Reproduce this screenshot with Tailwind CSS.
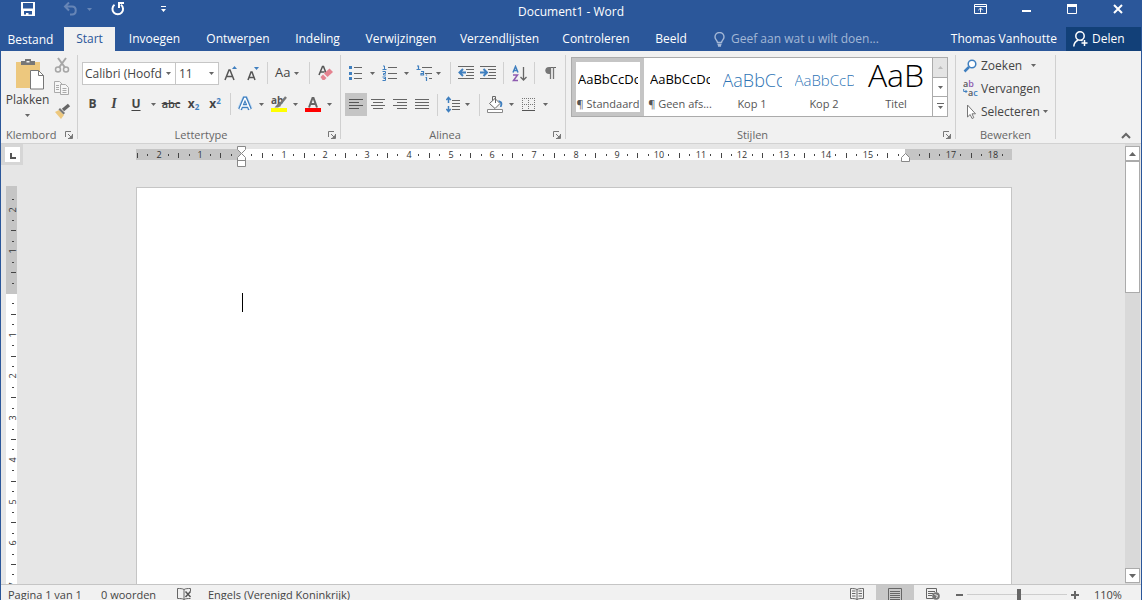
<!DOCTYPE html>
<html lang="nl">
<head>
<meta charset="utf-8">
<title>Document1 - Word</title>
<script src="https://cdn.jsdelivr.net/npm/@tailwindcss/browser@4"></script>
</head>
<body class="flex h-screen flex-col overflow-hidden border-x border-[#2b579a] bg-[#e6e6e6] font-['Open_Sans','Noto_Sans',sans-serif] text-xs text-[#444]">
<svg class="hidden">
  <symbol id="dn" viewBox="0 0 5 3"><path d="M0 0h5L2.500 3z" fill="currentColor"/></symbol>
  <symbol id="launch" viewBox="0 0 8 8"><path d="M.5 6V.5H6M3 3l3 3M7.500 3v4.500H3" fill="none" stroke="#777"/><path d="M7 4v3H4z" fill="#777"/></symbol>
</svg>

<header class="bg-[#2b579a] text-white">
  <div class="grid h-[27px] grid-cols-[1fr_auto_1fr]">
    <div class="flex items-start pl-5">
      <button aria-label="Opslaan" class="mt-[2px]"><svg width="14" height="14" viewBox="0 0 14 14"><path d="M0 0h14v14H0z" fill="#fff"/><path d="M2 1h10v5.500H2zM3 9h8v3.500H7.500V11H5v1.500H3z" fill="#2b579a"/></svg></button>
      <button aria-label="Ongedaan maken" class="ml-7 mt-[2px] flex items-center text-[#6685b6]"><svg width="16" height="14" viewBox="0 0 16 14"><path d="M2 4.500h7c5 0 5 8 0 8H7M6 .5L2 4.500l4 4" fill="none" stroke="currentColor" stroke-width="2"/></svg><svg class="ml-2" width="5" height="3"><use href="#dn"/></svg></button>
      <button aria-label="Opnieuw" class="ml-[19px] mt-[2px]"><svg width="14" height="14" viewBox="0 0 14 14"><path d="M3.500 2.800a5.300 5.300 0 1 0 6.500 0" fill="none" stroke="#fff" stroke-width="2"/><path d="M7 1h6M8 0v6" fill="none" stroke="#fff" stroke-width="2"/></svg></button>
      <button aria-label="Werkbalk aanpassen" class="ml-[35px] mt-[6px]"><svg width="7" height="7" viewBox="0 0 7 7"><path d="M1 0h5v1H1zM1 3h5L3.500 6z" fill="#fff"/></svg></button>
    </div>
    <h1 class="pt-1">Document1 - Word</h1>
    <div class="flex items-start justify-end">
      <button aria-label="Weergave lint" class="mt-1 flex w-[46px] justify-center"><svg width="13" height="10" viewBox="0 0 13 10"><path d="M.5.5h12v9H.5zM0 2.500h13M6.500 8.500V4M4.300 6.200l2.200-2.200 2.200 2.200" fill="none" stroke="#fff"/></svg></button>
      <button aria-label="Minimaliseren" class="mt-[10px] flex w-[46px] justify-center"><svg width="9" height="2"><path d="M0 0h9v2H0z" fill="#fff"/></svg></button>
      <button aria-label="Maximaliseren" class="mt-1 flex w-[46px] justify-center"><svg width="10" height="10"><path d="M.5 1h9v8.500h-9z" fill="none" stroke="#fff"/><path d="M0 0h10v3H0z" fill="#fff"/></svg></button>
      <button aria-label="Sluiten" class="mt-1 flex w-[46px] justify-center"><svg width="10" height="10"><path d="M1 1l8 8M9 1L1 9" stroke="#fff" stroke-width="2"/></svg></button>
    </div>
  </div>
  <div class="flex h-6 items-stretch">
    <nav class="flex">
      <button class="w-[63px] pr-1 pt-[2px]">Bestand</button>
      <button class="w-[51px] bg-[#f1f1f1] text-[#2b579a]">Start</button>
      <button class="w-[79px]">Invoegen</button>
      <button class="w-[88px]">Ontwerpen</button>
      <button class="w-[71px]">Indeling</button>
      <button class="w-[96px]">Verwijzingen</button>
      <button class="w-[101px]">Verzendlijsten</button>
      <button class="w-[92px]">Controleren</button>
      <button class="w-[58px]">Beeld</button>
    </nav>
    <label class="ml-[14px] flex flex-1 items-center gap-[6px] text-[#a3b7d6]">
      <svg class="shrink-0" width="11" height="15" viewBox="0 0 11 15"><path d="M3.500 10.500c0-2-2.500-3-2.500-5.500a4.500 4.500 0 0 1 9 0c0 2.500-2.500 3.500-2.500 5.500zM3.500 12.500h4M4 14h3" fill="none" stroke="currentColor" stroke-width="1.400"/></svg>
      <input type="text" aria-label="Uitleg" placeholder="Geef aan wat u wilt doen..." class="w-40 bg-transparent outline-none placeholder:text-[#a3b7d6]">
    </label>
    <button class="mr-[9px]">Thomas Vanhoutte</button>
    <button class="flex w-[75px] items-center gap-[4px] bg-[#124078] pl-[7px]"><svg width="15" height="16" viewBox="0 0 15 16"><circle cx="7" cy="5" r="4.200" fill="none" stroke="#fff" stroke-width="1.500"/><path d="M.8 15.500c.2-3.500 2-5.500 4.500-6.500M8 9l1.500 1M11.500 9v6M8.500 12h6" fill="none" stroke="#fff" stroke-width="1.500"/></svg>Delen</button>
  </div>
</header>

<div class="flex h-[93px] shrink-0 border-b border-[#d2d2d2] bg-[#f1f1f1] text-[#444]">
  <!-- Klembord -->
  <section class="flex w-[76px] flex-col">
    <div class="flex">
      <button class="flex w-[53px] flex-col items-center pt-2">
        <svg class="ml-[6px]" width="29" height="31" viewBox="0 0 29 31"><path d="M0 3h24v26H0z" fill="#edc87e"/><path d="M5 6V2h4V0h6v2h4v4z" fill="#777"/><path d="M10.500 2h3v1.500h-3z" fill="#f1f1f1"/><path d="M14.500 11.500h8l5 5v13.500h-13z" fill="#fff" stroke="#777"/><path d="M22.500 11.500v5h5" fill="none" stroke="#777"/></svg>
        <span class="leading-5">Plakken</span>
        <svg class="mt-1 text-[#666]" width="5" height="3"><use href="#dn"/></svg>
      </button>
      <div class="flex flex-col gap-[7px] pt-[6px]">
        <button aria-label="Knippen"><svg width="16" height="16" viewBox="0 0 16 16"><g fill="none" stroke="#a6a6a6" stroke-width="1.500"><circle cx="4" cy="12.500" r="2.500"/><circle cx="12" cy="12.500" r="2.500"/><path d="M5 10.500L12 1M11 10.500L4 1" stroke-width="2"/></g></svg></button>
        <button aria-label="Kopiëren"><svg width="16" height="16" viewBox="0 0 16 16"><g fill="#f6f6f6" stroke="#aaa"><path d="M.5 1.500h5l3 3v8h-8z"/><path d="M6.500 4.500h5l3 3v7h-8z"/><path d="M2 5.500h3M2 7.500h3M2 9.500h3M8.500 8.500h4M8.500 10.500h4M8.500 12.500h4"/></g></svg></button>
        <button aria-label="Opmaak kopiëren"><svg width="17" height="16" viewBox="0 0 17 16"><path d="M1 9l4-2 5 5-3 4z" fill="#edc87e"/><path d="M6 5l5 5-1.500 1.500L4.500 6.500z" fill="#777"/><path d="M9 7l6-5" stroke="#666" stroke-width="3.500"/></svg></button>
      </div>
    </div>
    <div class="mt-auto flex h-4 items-center justify-between pl-[5px] pr-1 text-[11px] text-[#666]"><span>Klembord</span><button aria-label="Klembord openen"><svg width="8" height="8"><use href="#launch"/></svg></button></div>
  </section>
  <div class="my-1 w-px bg-[#d0d0d0]"></div>

  <!-- Lettertype -->
  <section class="flex w-[262px] flex-col pt-[11px]">
    <div class="flex h-[22px] items-center pl-1">
      <div class="flex h-[23px] w-[94px] items-center border border-[#c6c6c6] bg-white pl-[2px] pr-1"><select aria-label="Lettertype" class="w-[77px] appearance-none overflow-hidden bg-white pt-px outline-none"><option>Calibri (Hoofdtekst)</option></select><svg class="ml-auto shrink-0 text-[#666]" width="5" height="3"><use href="#dn"/></svg></div>
      <div class="flex h-[23px] w-[43px] items-center border border-l-0 border-[#c6c6c6] bg-white pl-[3px] pr-1"><select aria-label="Tekengrootte" class="w-6 appearance-none bg-white pt-px outline-none"><option>11</option></select><svg class="ml-auto text-[#666]" width="5" height="3"><use href="#dn"/></svg></div>
      <button aria-label="Tekst vergroten" class="ml-px flex w-[22px] items-center justify-center"><svg width="14" height="15" viewBox="0 0 14 15"><path d="M1 14L5 4h1l4 10M2.500 10.500h6" fill="none" stroke="#555" stroke-width="1.500"/><path d="M8 3l2.500-3L13 3z" fill="#3f7fbf"/></svg></button>
      <button aria-label="Tekst verkleinen" class="flex w-[22px] items-center justify-center"><svg width="14" height="15" viewBox="0 0 14 15"><path d="M2 14l3-8h1l3 8M3 11.500h5" fill="none" stroke="#555" stroke-width="1.500"/><path d="M8 1h5L10.500 4z" fill="#3f7fbf"/></svg></button>
      <div class="mx-[3px] h-[22px] w-px bg-[#d0d0d0]"></div>
      <button class="flex h-[22px] w-8 items-center gap-[4px] pl-1"><span class="text-[13px]">Aa</span><svg class="shrink-0 text-[#666]" width="5" height="3"><use href="#dn"/></svg></button>
      <div class="mx-[6px] h-[22px] w-px bg-[#d0d0d0]"></div>
      <button aria-label="Opmaak wissen" class="flex w-[20px] items-center justify-center"><svg width="16" height="16" viewBox="0 0 16 16"><path d="M1 10L4.500 1.500h1L8 8M2.500 7h4" fill="none" stroke="#555" stroke-width="1.500"/><path d="M11.500 3.500L15 7l-5.500 5L6 8.500z" fill="#e58390"/><path d="M5 9.500l3.500 3.500-2 2H4.500L2.500 12z" fill="#e58390"/></svg></button>
    </div>
    <div class="mt-[9px] flex h-[22px] items-center pl-1">
      <button class="w-[21px] font-bold">B</button>
      <button class="w-[22px] font-['Liberation_Serif'] text-sm font-bold italic">I</button>
      <button class="w-[22px] font-bold underline underline-offset-2">U</button>
      <button aria-label="Onderstrepingsopties" class="flex w-3 justify-center text-[#666]"><svg width="5" height="3"><use href="#dn"/></svg></button>
      <button class="w-6 text-[11px] font-semibold line-through">abc</button>
      <button class="w-[21px] font-bold">x<sub class="text-[8px] text-[#3f7fbf]">2</sub></button>
      <button class="w-[22px] font-bold">x<sup class="text-[8px] text-[#3f7fbf]">2</sup></button>
      <div class="ml-1 mr-[3px] h-[22px] w-px bg-[#d0d0d0]"></div>
      <button aria-label="Teksteffecten" class="flex w-[22px] justify-center"><svg width="16" height="16" viewBox="0 0 16 16"><path d="M3 13L7.500 3h1L13 13M5 10h6" fill="none" stroke="#c5dcf2" stroke-width="5.500"/><path d="M3 13.500L7.500 2.500h1L13 13.500M5 10h6" fill="none" stroke="#3f7fbf" stroke-width="3.800"/><path d="M3 13.500L7.700 2.500h.6L13 13.500M5 10h6" fill="none" stroke="#fff" stroke-width="1.500"/></svg></button>
      <button aria-label="Teksteffectopties" class="flex w-[10px] justify-center text-[#666]"><svg width="5" height="3"><use href="#dn"/></svg></button>
      <button aria-label="Markeren" class="ml-[2px] flex w-[22px] justify-center"><svg width="16" height="18" viewBox="0 0 16 18"><text x="0" y="9" font-size="10" font-weight="700" fill="#555">ab</text><path d="M15 2L8 10.500" stroke="#777" stroke-width="2.500"/><path d="M7 8.500l3 2.500-3 1.500H3.500z" fill="#777"/><path d="M0 13h16v4H0z" fill="#ff0"/></svg></button>
      <button aria-label="Markeringsopties" class="flex w-[10px] justify-center text-[#666]"><svg width="5" height="3"><use href="#dn"/></svg></button>
      <button aria-label="Tekstkleur" class="ml-[2px] flex w-[22px] justify-center"><svg width="16" height="18" viewBox="0 0 16 18"><path d="M4 12.500L7.500 3h1L12 12.500M5.500 9h5.500" fill="none" stroke="#666" stroke-width="2"/><path d="M0 13h16v4H0z" fill="red"/></svg></button>
      <button aria-label="Tekstkleuropties" class="flex w-[10px] justify-center text-[#666]"><svg width="5" height="3"><use href="#dn"/></svg></button>
    </div>
    <div class="mt-auto flex h-4 items-center pr-1 text-[11px] text-[#666]"><span class="flex-1 pr-1 text-center">Lettertype</span><button aria-label="Lettertype openen"><svg width="8" height="8"><use href="#launch"/></svg></button></div>
  </section>
  <div class="my-1 w-px bg-[#d0d0d0]"></div>

  <!-- Alinea -->
  <section class="flex w-[224px] flex-col pt-[11px]">
    <div class="flex h-[22px] items-center pl-1 text-[#666]">
      <button aria-label="Opsommingstekens" class="flex w-[21px] justify-center"><svg width="15" height="16" viewBox="0 0 15 16"><path d="M1 1h3v3H1zM1 7h3v3H1zM1 12h3v3H1z" fill="#3f7fbf"/><path d="M6 2.500h8M6 8.500h8M6 13.500h8" stroke="#666"/></svg></button>
      <button aria-label="Opsommingsopties" class="flex w-3 justify-center"><svg width="5" height="3"><use href="#dn"/></svg></button>
      <button aria-label="Nummering" class="flex w-[23px] justify-center"><svg width="15" height="16" viewBox="0 0 15 16"><path d="M1 1h1.500v4M.5 4.500h4M.5 6.500h3v2h-2v1.500h2.500M.5 12h3v3.500H.5M1.500 13.500h2" fill="none" stroke="#3f7fbf"/><path d="M6 2.500h9M6 8.500h9M6 13.500h9" stroke="#666"/></svg></button>
      <button aria-label="Nummeringsopties" class="flex w-[10px] justify-center"><svg width="5" height="3"><use href="#dn"/></svg></button>
      <button aria-label="Lijst met meerdere niveaus" class="ml-[2px] flex w-[22px] justify-center"><svg width="17" height="17" viewBox="0 0 17 17"><path d="M1 1h1.500v3M.5 4.500h4M5 6.500h2.500V10H5V8.500h2M10.500 9.500v1M9.500 12.500h1V16" fill="none" stroke="#3f7fbf" stroke-width="1.200"/><path d="M6 2.500h10M9 8.500h7M13 13.500h3" stroke="#666"/></svg></button>
      <button aria-label="Lijstopties" class="flex w-[6px] justify-center"><svg width="5" height="3"><use href="#dn"/></svg></button>
      <div class="ml-[9px] mr-1 h-[22px] w-px bg-[#d0d0d0]"></div>
      <button aria-label="Inspringing verkleinen" class="flex w-[22px] justify-center"><svg width="16" height="14" viewBox="0 0 16 14"><path d="M0 .5h16M8 3.500h8M9 6.500h7M8 9.500h8M0 12.500h16" stroke="#666"/><path d="M8 6.500H2M5 3L1.500 6.500 5 10" fill="none" stroke="#3f7fbf" stroke-width="2"/></svg></button>
      <button aria-label="Inspringing vergroten" class="flex w-[22px] justify-center"><svg width="16" height="14" viewBox="0 0 16 14"><path d="M0 .5h16M8 3.500h8M9 6.500h7M8 9.500h8M0 12.500h16" stroke="#666"/><path d="M0 6.500h6M3.500 3L7 6.500 3.500 10" fill="none" stroke="#3f7fbf" stroke-width="2"/></svg></button>
      <div class="mx-1 h-[22px] w-px bg-[#d0d0d0]"></div>
      <button aria-label="Sorteren" class="flex w-[22px] justify-center"><svg width="15" height="17" viewBox="0 0 15 17"><path d="M1 7.500L3.500 1.500 6 7.500M2 5.500h3" fill="none" stroke="#3f7fbf" stroke-width="1.500"/><path d="M1 10h4.500L1.500 15.500H6" fill="none" stroke="#8e5bb0" stroke-width="1.500"/><path d="M11.500 2v13M8.500 12l3 3 3-3" fill="none" stroke="#666" stroke-width="1.300"/></svg></button>
      <div class="mx-1 h-[22px] w-px bg-[#d0d0d0]"></div>
      <button aria-label="Alles weergeven" class="flex w-[22px] justify-center"><svg width="11" height="13" viewBox="0 0 11 13"><path d="M4 0h7v1H4z" fill="#666"/><path d="M5 0v7H4C-1 7-1 0 4 0z" fill="#777"/><path d="M5.500 0v12M8.500 0v12" stroke="#777" stroke-width="1.300"/></svg></button>
    </div>
    <div class="mt-[9px] flex h-[23px] items-center pl-1 text-[#666]">
      <button aria-label="Links uitlijnen" class="flex h-[23px] w-[22px] items-center justify-center bg-[#c5c5c5]"><svg width="14" height="11"><path d="M0 .5h14M0 3.500h10M0 6.500h14M0 9.500h10" stroke="#555"/></svg></button>
      <button aria-label="Centreren" class="flex w-[22px] justify-center"><svg width="14" height="11"><path d="M0 .5h14M2 3.500h10M0 6.500h14M2 9.500h10" stroke="#666"/></svg></button>
      <button aria-label="Rechts uitlijnen" class="flex w-[22px] justify-center"><svg width="14" height="11"><path d="M0 .5h14M4 3.500h10M0 6.500h14M4 9.500h10" stroke="#666"/></svg></button>
      <button aria-label="Uitvullen" class="flex w-[22px] justify-center"><svg width="14" height="11"><path d="M0 .5h14M0 3.500h14M0 6.500h14M0 9.500h14" stroke="#666"/></svg></button>
      <div class="mx-1 h-[22px] w-px bg-[#d0d0d0]"></div>
      <button aria-label="Regelafstand" class="flex w-[22px] justify-center"><svg width="14" height="17" viewBox="0 0 14 17"><path d="M6 4.500h8M6 7.500h8M6 10.500h8M6 13.500h8" stroke="#666"/><path d="M2.500 1.500V7M2.500 10v5.500M.3 4L2.500 1.500 4.700 4M.3 13l2.200 2.500L4.700 13" fill="none" stroke="#3f7fbf" stroke-width="1.500"/></svg></button>
      <button aria-label="Regelafstandopties" class="flex w-[7px] justify-center"><svg width="5" height="3"><use href="#dn"/></svg></button>
      <div class="ml-2 mr-1 h-[22px] w-px bg-[#d0d0d0]"></div>
      <button aria-label="Arcering" class="flex w-[22px] justify-center"><svg width="17" height="17" viewBox="0 0 17 17"><path d="M2.500 7.500L8 2.500l5 5-5 5z" fill="#fff" stroke="#666"/><path d="M5.500 4.500V.5h3V7" fill="none" stroke="#666"/><path d="M11 4.500c4 0 5.500 2.500 3.500 6.500L13 11l.5-3.500z" fill="#3f7fbf"/><path d="M.5 13.500h15v3H.5z" fill="#fff" stroke="#888"/></svg></button>
      <button aria-label="Arceringsopties" class="flex w-[10px] justify-center"><svg width="5" height="3"><use href="#dn"/></svg></button>
      <button aria-label="Randen" class="flex w-[24px] justify-center"><svg width="13" height="14" viewBox="0 0 13 14"><path d="M0 .5h13M0 6.500h13M.5 0v13M6.500 0v13M12.500 0v13" stroke="#777" stroke-dasharray="1 1"/><path d="M0 12.500h13" stroke="#555"/></svg></button>
      <button aria-label="Randopties" class="flex w-[10px] justify-center"><svg width="5" height="3"><use href="#dn"/></svg></button>
    </div>
    <div class="mt-auto flex h-4 items-center pr-1 text-[11px] text-[#666]"><span class="flex-1 pr-1 text-center">Alinea</span><button aria-label="Alinea openen"><svg width="8" height="8"><use href="#launch"/></svg></button></div>
  </section>
  <div class="my-1 w-px bg-[#d0d0d0]"></div>

  <!-- Stijlen -->
  <section class="flex w-[389px] flex-col pt-[6px]">
    <div class="mx-[5px] flex h-[60px] w-[377px] border border-[#ababab] bg-white text-[11px] text-[#555]">
      <button class="flex w-[72px] flex-col items-center border-4 border-[#c5c5c5] pt-px"><span class="flex h-[33px] w-[60px] items-center overflow-hidden whitespace-nowrap text-[13px] text-black">AaBbCcDc</span><span class="whitespace-nowrap leading-4">¶ Standaard</span></button>
      <button class="flex w-[72px] flex-col items-center border-4 border-white pt-px"><span class="flex h-[33px] w-[60px] items-center overflow-hidden whitespace-nowrap text-[13px] text-black">AaBbCcDc</span><span class="whitespace-nowrap leading-4">¶ Geen afs...</span></button>
      <button class="flex w-[72px] flex-col items-center border-4 border-white pt-px"><span class="flex h-[33px] w-[59px] items-center overflow-hidden whitespace-nowrap text-lg font-light text-[#2e74b5]">AaBbCc</span><span class="leading-4">Kop 1</span></button>
      <button class="flex w-[72px] flex-col items-center border-4 border-white pt-px"><span class="flex h-[33px] w-[59px] items-center overflow-hidden whitespace-nowrap text-[15px] font-light text-[#2e74b5]">AaBbCcD</span><span class="leading-4">Kop 2</span></button>
      <button class="flex w-[72px] flex-col items-center border-4 border-white pt-px"><span class="flex h-[33px] w-[60px] items-start justify-center overflow-hidden whitespace-nowrap text-[32px] font-light leading-6 text-black">AaB</span><span class="leading-4">Titel</span></button>
      <div class="ml-auto flex w-[15px] flex-col border-l border-[#ababab] text-[#666]">
        <button aria-label="Vorige rij" class="flex flex-1 items-center justify-center bg-[#e4e4e4] text-[#bbb]"><svg class="rotate-180" width="5" height="3"><use href="#dn"/></svg></button>
        <button aria-label="Volgende rij" class="flex flex-1 items-center justify-center border-y border-[#ababab]"><svg width="5" height="3"><use href="#dn"/></svg></button>
        <button aria-label="Meer stijlen" class="flex flex-1 items-center justify-center"><svg width="7" height="7"><path d="M0 .5h7" stroke="#666"/><path d="M1 3h5L3.500 6z" fill="#666"/></svg></button>
      </div>
    </div>
    <div class="mt-auto flex h-4 items-center pr-1 text-[11px] text-[#666]"><span class="flex-1 pr-1 text-center">Stijlen</span><button aria-label="Stijlen openen"><svg width="8" height="8"><use href="#launch"/></svg></button></div>
  </section>
  <div class="my-1 w-px bg-[#d0d0d0]"></div>

  <!-- Bewerken -->
  <section class="flex w-[99px] flex-col pt-[3px]">
    <div class="flex flex-col items-start pl-[7px]">
      <button class="flex h-[23px] items-center gap-[3px]"><svg width="15" height="14" viewBox="0 0 15 14"><circle cx="9" cy="5" r="3.800" fill="#fff" stroke="#3f7fbf" stroke-width="1.500"/><path d="M6 8l-4.500 4.500" stroke="#3f7fbf" stroke-width="2.500"/></svg>Zoeken<svg class="ml-[6px] text-[#666]" width="5" height="3"><use href="#dn"/></svg></button>
      <button class="flex h-[23px] items-center gap-[2px]"><svg width="16" height="17" viewBox="0 0 16 17"><text x="0" y="7" font-size="9" font-weight="600" fill="#555">a<tspan fill="#8e5bb0">b</tspan></text><text x="5" y="16" font-size="9" font-weight="600" fill="#555">a<tspan fill="#3f7fbf">c</tspan></text><path d="M.7 9v2.500H4M2.500 10L4 11.500 2.500 13" fill="none" stroke="#3f7fbf"/></svg>Vervangen</button>
      <button class="flex h-[23px] items-center gap-[3px]"><svg width="15" height="16" viewBox="0 0 15 16"><path d="M4.500 1v12l2.700-2.500L9 14.500l1.800-.8L9 9.800h3.500z" fill="#fff" stroke="#777"/></svg>Selecteren<svg class="text-[#666]" width="5" height="3"><use href="#dn"/></svg></button>
    </div>
    <div class="mt-auto flex h-4 items-center justify-center text-[11px] text-[#666]">Bewerken</div>
  </section>
  <div class="my-1 w-px bg-[#d0d0d0]"></div>
  <div class="flex flex-1 items-end justify-end"><button aria-label="Lint samenvouwen" class="mb-1 mr-[10px]"><svg width="10" height="7"><path d="M1 6l4-4 4 4" fill="none" stroke="#666" stroke-width="2"/></svg></button></div>
</div>

<main class="flex min-h-0 flex-1">
  <div class="flex w-[22px] flex-col overflow-hidden">
    <div class="h-[21px] w-full shrink-0 bg-[#d6d6d6] px-[4px] pt-[3px]"><button aria-label="Tabstop" class="flex size-[15px] items-center justify-center bg-white pt-[3px]"><svg width="6" height="6"><path d="M1 0v5h5" fill="none" stroke="#555" stroke-width="2"/></svg></button></div>
    <svg id="vruler" class="ml-[5px] mt-[21px] shrink-0" width="11" height="420"><path d="M0 0h11v420H0z" fill="#fff"/><path d="M0 0h11v108H0z" fill="#c5c5c5"/></svg>
  </div>
  <div class="flex min-w-0 flex-1 flex-col items-center overflow-hidden">
    <svg id="hruler" class="mt-px shrink-0" width="876" height="24"><path d="M0 4h876v11H0z" fill="#c5c5c5"/><path d="M105 4h664v11H105z" fill="#fff"/></svg>
    <div class="mt-[18px] w-[876px] flex-1 border border-b-0 border-[#c5c5c5] bg-white px-[105px] pt-[105px]"><div class="h-[19px] w-px bg-black"></div></div>
  </div>
  <div class="mr-px flex w-[15px] flex-col bg-[#d9d9d9] pb-px pt-[2px]">
    <button aria-label="Omhoog" class="flex h-[15px] items-center justify-center border border-[#ababab] bg-white"><svg width="7" height="4"><path d="M0 4h7L3.500 0z" fill="#666"/></svg></button>
    <div class="h-[132px] border border-[#ababab] bg-white"></div>
    <button aria-label="Omlaag" class="mt-auto flex h-[15px] items-center justify-center border border-[#ababab] bg-white"><svg width="7" height="4"><path d="M0 0h7L3.500 4z" fill="#666"/></svg></button>
  </div>
</main>

<footer class="flex h-4 shrink-0 items-start overflow-hidden border-t border-[#c5c5c5] bg-[#f1f1f1] pl-[7px] text-[11px] leading-4 text-[#444]">
  <span class="w-[93px] whitespace-nowrap pt-[2px]">Pagina 1 van 1</span>
  <span class="w-[76px] whitespace-nowrap pt-[2px]">0 woorden</span>
  <button aria-label="Spelling" class="pt-[3px]"><svg width="15" height="12" viewBox="0 0 15 12"><path d="M7 1.500C5.500.5 3 .5.500.5v10c2.500 0 5 0 6.500 1zM7 1.500C8.500.5 11 .5 13.500.5v3M7 11.500c1.500-1 4-1 6.500-1" fill="none" stroke="#666"/><path d="M8.500 3.500l5 5.500M13.500 3.500l-5 5.500" stroke="#555" stroke-width="1.500"/></svg></button>
  <span class="ml-4 whitespace-nowrap pt-[2px]">Engels (Verenigd Koninkrijk)</span>
  <div class="ml-auto flex h-full items-start">
    <button aria-label="Leesmodus" class="flex w-[38px] justify-center pt-[3px]"><svg width="14" height="12" viewBox="0 0 14 12"><path d="M.5.500c2.500 0 5 0 6.500 1 1.500-1 4-1 6.500-1v10c-2.500 0-5 0-6.500 1-1.500-1-4-1-6.500-1zM7 1.500v10M2 3h3.500M2 5.500h3.500M2 8h3.500M8.500 3H12M8.500 5.500H12M8.500 8H12" fill="none" stroke="#666"/></svg></button>
    <button aria-label="Afdrukweergave" class="flex h-full w-[38px] justify-center bg-[#c8c8c8] pt-[3px]"><svg width="14" height="12"><path d="M.5 13V.5h13V13M2 3.500h10M2 5.500h10M2 7.500h10M2 9.500h10M2 11.500h10" fill="none" stroke="#666"/></svg></button>
    <button aria-label="Webindeling" class="flex w-[38px] justify-center pt-[3px]"><svg width="14" height="12" viewBox="0 0 14 12"><path d="M7 10.500H.5V.5h10v4M2 3.500h7M2 5.500h5M2 7.500h4" fill="none" stroke="#666"/><circle cx="10" cy="8" r="3.800" fill="#777"/><path d="M8.500 6.500l3 1-1 2.500" stroke="#eee" fill="none"/></svg></button>
    <button aria-label="Uitzoomen" class="ml-[4px] pt-[9px]"><svg width="7" height="2"><path d="M0 0h7v2H0z" fill="#666"/></svg></button>
    <input type="range" min="0" max="100" value="52" aria-label="Zoomen" class="mx-1 mt-[4px] h-[11px] w-[100px] appearance-none bg-linear-to-b from-transparent from-45% via-[#aaa] via-45% to-transparent to-55% [&::-webkit-slider-thumb]:h-[11px] [&::-webkit-slider-thumb]:w-1 [&::-webkit-slider-thumb]:appearance-none [&::-webkit-slider-thumb]:bg-[#666]">
    <button aria-label="Inzoomen" class="pt-[6px]"><svg width="8" height="8"><path d="M0 4h8M4 0v8" stroke="#666" stroke-width="2"/></svg></button>
    <button class="w-[62px] pl-[15px] pt-[2px] text-left">110%</button>
  </div>
</footer>

<script>
  // One centimetre at 110% zoom.
  const CM = 41.7;
  const NS = 'http://www.w3.org/2000/svg';
  function add(svg, tag, attrs, text) {
    const el = document.createElementNS(NS, tag);
    for (const k in attrs) el.setAttribute(k, attrs[k]);
    if (text) el.textContent = text;
    svg.appendChild(el);
  }
  function ruler(svg, zero, length, vertical, skip) {
    for (let q = -12; q <= 80; q++) {
      const p = Math.round(zero + q * CM / 4);
      if (p < 1 || p > length - 2 || q === 0 || skip.includes(q)) continue;
      if (q % 4 === 0) {
        add(svg, 'text', { x: 0, y: 0, 'font-size': 9, 'text-anchor': 'middle', fill: '#333', 'font-family': 'Open Sans',
          transform: vertical ? `translate(10 ${p}) rotate(-90)` : `translate(${p + 1} 13)` }, String(Math.abs(q / 4)));
      } else {
        const n = q % 2 === 0 ? 5 : 2, o = q % 2 === 0 ? 0 : 1;
        add(svg, 'rect', vertical ? { x: 5 + o, y: p, width: n, height: 1, fill: '#444' }
                                  : { x: p, y: 8 + o, width: 1, height: n, fill: '#444' });
      }
    }
  }
  const h = document.getElementById('hruler');
  ruler(h, 105, 876, false, [64]);
  add(h, 'path', { d: 'M101.500 1.500h8v3l-4 4 4 4v9h-8v-9l4-4-4-4zM101.500 15.500h8', fill: '#fff', stroke: '#888' });
  add(h, 'path', { d: 'M765.500 16.500v-4l4-4 4 4v4z', fill: '#fff', stroke: '#888' });
  ruler(document.getElementById('vruler'), 107, 420, true, [-10]);
</script>
</body>
</html>
